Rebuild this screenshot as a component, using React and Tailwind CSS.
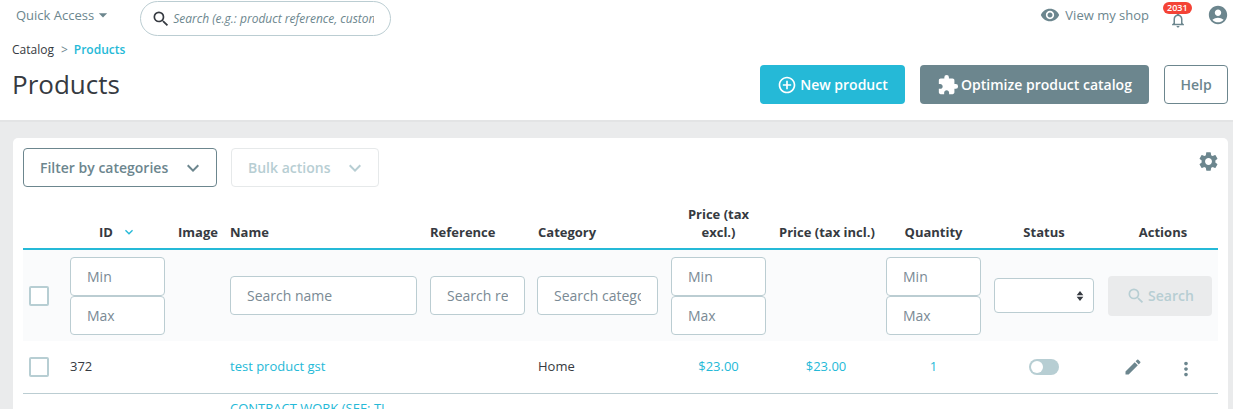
import { MdSearch, MdVisibility, MdNotificationsNone, MdAccountCircle, MdAddCircleOutline, MdExtension, MdKeyboardArrowDown, MdSettings, MdEdit, MdMoreVert, MdArrowDropDown } from "react-icons/md"

const COLS = "grid grid-cols-[47px_108px_52px_200px_107px_134px_108px_107px_108px_114px_110px]"
const INPUT = "w-[95px] h-[39px] bg-white border border-[#bbcdd2] rounded-[4px] px-4 text-sm text-[#363a41] placeholder:text-[#7a8a94] outline-none"

function MinMax() {
  return (
    <div className="flex flex-col">
      <input readOnly placeholder="Min" className={INPUT} />
      <input readOnly placeholder="Max" className={INPUT} />
    </div>
  )
}

function SearchInput({ placeholder, width }) {
  return (
    <input
      readOnly
      placeholder={placeholder}
      className={`${width} h-[39px] bg-white border border-[#bbcdd2] rounded-[4px] px-4 text-sm placeholder:text-[#7a8a94] outline-none`}
    />
  )
}

function Checkbox() {
  return <div className="w-5 h-5 border-2 border-[#b7ced3] rounded-[2px] bg-white ml-[6px]" />
}

function Th({ children, className = "" }) {
  return <div className={`self-end text-[13px] leading-[18px] font-bold text-[#363a41] ${className}`}>{children}</div>
}

export default function App() {
  return (
    <div className="h-[409px] overflow-hidden bg-[#eaebec] text-[#363a41] text-sm" style={{ fontFamily: '"Open Sans", sans-serif' }}>
      <header className="h-[122px] bg-white border-b-2 border-[#e3e4e5]">
        <div className="h-[37px] flex items-start pl-4 pr-[4px]">
          <div className="flex items-center mt-[5px] text-[13px] leading-[18px] text-[#6c868e]">
            Quick Access
            <MdArrowDropDown className="w-5 h-5 -ml-[1px]" />
          </div>
          <div className="ml-[27px] mt-px w-[251px] h-[35px] flex items-center rounded-full border border-[#bbcdd2] pl-[10px] pr-4">
            <MdSearch className="w-5 h-5 text-[#363a41] shrink-0" />
            <input readOnly placeholder="Search (e.g.: product reference, customer name...)" className="ml-[2px] w-full text-xs italic placeholder:text-[#6c868e] outline-none" />
          </div>
          <div className="ml-auto flex items-center mt-[4px] text-[#6c868e]">
            <MdVisibility className="w-5 h-5 mr-[5px]" />
            <span className="text-[13px] leading-[18px]">View my shop</span>
            <div className="relative ml-[20px] w-[18px] h-5">
              <MdNotificationsNone className="w-[18px] h-[18px] absolute top-[6px] left-0" />
              <span className="absolute -top-[3px] -left-[6px] h-3 px-[4px] rounded-full bg-[#f44336] text-white text-[9px] leading-3 font-semibold">2031</span>
            </div>
            <MdAccountCircle className="w-[22px] h-[22px] ml-[20px]" />
          </div>
        </div>
        <div className="pl-3 mt-[5px] flex items-center text-xs leading-[16px]">
          <span>Catalog</span>
          <span className="ml-[7px] text-[#6c868e]">&gt;</span>
          <span className="ml-[6px] text-[#25b9d7] font-semibold">Products</span>
        </div>
        <div className="flex items-start pl-3 pr-[5px] mt-[7px]">
          <h1 className="text-[26px] leading-[36px] mt-px font-normal text-[#363a41]">Products</h1>
          <div className="ml-auto flex gap-[15px]">
            <button className="w-[145px] h-[39px] flex items-center justify-center rounded-[4px] bg-[#25b9d7] text-white text-sm font-semibold">
              <MdAddCircleOutline className="w-5 h-5 mr-[3px]" />
              New product
            </button>
            <button className="w-[229px] h-[39px] flex items-center justify-center rounded-[4px] bg-[#6c868e] text-white text-sm font-semibold">
              <MdExtension className="w-[22px] h-[22px] mr-[2px]" />
              Optimize product catalog
            </button>
            <button className="w-[64px] h-[39px] rounded-[4px] border border-[#6c868e] bg-white text-[#6c868e] text-sm font-semibold">Help</button>
          </div>
        </div>
      </header>

      <main className="mt-[16px] ml-[13px] mr-[5px] bg-white rounded-[5px] px-[10px] pt-[10px] pb-4">
        <div className="flex items-start justify-between">
          <div className="flex gap-[14px]">
            <div className="w-[194px] h-[39px] flex items-center justify-between pl-4 pr-[11px] border border-[#6c868e] rounded-[4px] text-[#6c868e] text-sm font-semibold">
              Filter by categories
              <MdKeyboardArrowDown className="w-6 h-6" />
            </div>
            <div className="w-[148px] h-[39px] flex items-center justify-between pl-4 pr-[11px] border border-[#e6e9ea] rounded-[4px] text-[#b7ced3] text-sm font-semibold">
              Bulk actions
              <MdKeyboardArrowDown className="w-6 h-6" />
            </div>
          </div>
          <MdSettings className="w-[23px] h-[23px] text-[#6c868e] mr-[-2px] mt-[2px]" />
        </div>

        <div className={`${COLS} h-[64px] pb-[7px] border-b-2 border-[#25b9d7] mt-[-1px]`}>
          <div />
          <Th className="flex items-center pl-[29px]">
            ID
            <MdKeyboardArrowDown className="w-4 h-4 ml-[8px] text-[#25b9d7]" />
          </Th>
          <Th>Image</Th>
          <Th>Name</Th>
          <Th>Reference</Th>
          <Th className="pl-px">Category</Th>
          <Th className="w-[95px] text-center">Price (tax excl.)</Th>
          <Th className="w-[94px] text-center whitespace-nowrap">Price (tax incl.)</Th>
          <Th className="w-[95px] text-center">Quantity</Th>
          <Th className="w-[100px] text-center">Status</Th>
          <Th className="w-[110px] text-center">Actions</Th>
        </div>

        <div className={`${COLS} h-[91px] items-center bg-[#fafbfc]`}>
          <Checkbox />
          <MinMax />
          <div />
          <SearchInput placeholder="Search name" width="w-[187px]" />
          <SearchInput placeholder="Search reference" width="w-[95px]" />
          <SearchInput placeholder="Search category" width="w-[121px]" />
          <MinMax />
          <div />
          <MinMax />
          <div className="relative w-[100px]">
            <select className="w-full h-[35px] block appearance-none bg-white border border-[#bbcdd2] rounded-[4px] outline-none" />
            <svg viewBox="0 0 8 12" className="absolute right-[10px] top-[13px] w-2 h-[10px] text-[#363a41]" fill="currentColor">
              <path d="M4 0 8 5H0zM4 12 0 7h8z" />
            </svg>
          </div>
          <button className="w-[104px] h-10 flex items-center justify-center rounded-[4px] bg-[#eaebec] text-[#b7ced3] text-sm font-semibold">
            <MdSearch className="w-5 h-5 mr-[2px]" />
            Search
          </button>
        </div>

        <div className={`${COLS} h-[53px] items-center border-b border-[#bbcdd2]`}>
          <Checkbox />
          <div className="text-[13px] -mt-[2px]">372</div>
          <div />
          <div className="text-[13px] -mt-[2px] text-[#25b9d7]">test product gst</div>
          <div />
          <div className="text-[13px] -mt-[2px] pl-px">Home</div>
          <div className="w-[95px] text-center text-[13px] -mt-[2px] text-[#25b9d7]">$23.00</div>
          <div className="w-[94px] text-center text-[13px] -mt-[2px] text-[#25b9d7]">$23.00</div>
          <div className="w-[95px] text-center text-[13px] -mt-[2px] text-[#25b9d7]">1</div>
          <div className="w-[100px] flex justify-center">
            <div className="w-[30px] h-4 rounded-full bg-[#b7ced3] flex items-center pl-[2px]">
              <div className="w-3 h-3 rounded-full bg-white" />
            </div>
          </div>
          <div className="flex items-center pl-[15px] text-[#6c868e]">
            <MdEdit className="w-5 h-5" />
            <MdMoreVert className="w-[22px] h-[22px] ml-[32px] mt-[3px]" />
          </div>
        </div>

        <div className={`${COLS} pt-[5px]`}>
          <div />
          <div />
          <div />
          <div className="text-[13px] leading-[18px] text-[#25b9d7]">CONTRACT WORK (SEE: TI</div>
        </div>
      </main>
    </div>
  )
}
